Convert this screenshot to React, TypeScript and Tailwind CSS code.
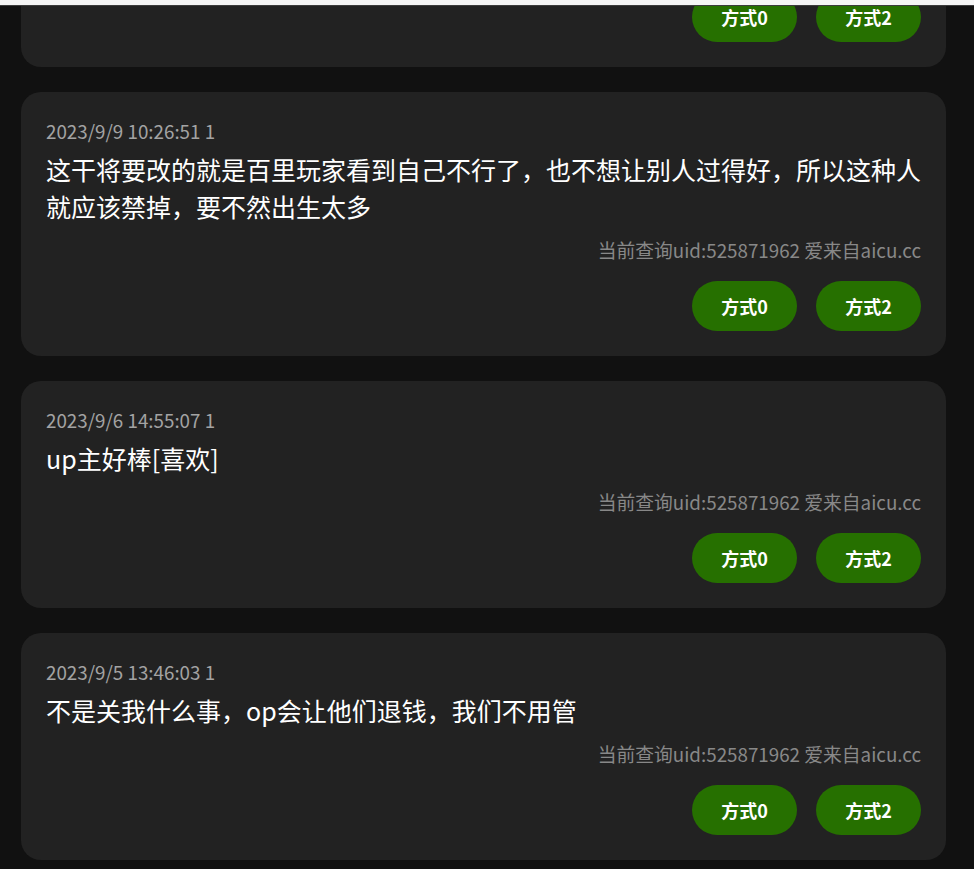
const comments = [
  {
    time: "2023/9/9 10:26:51 1",
    text: "这干将要改的就是百里玩家看到自己不行了，也不想让别人过得好，所以这种人就应该禁掉，要不然出生太多",
  },
  { time: "2023/9/6 14:55:07 1", text: "up主好棒[喜欢]" },
  { time: "2023/9/5 13:46:03 1", text: "不是关我什么事，op会让他们退钱，我们不用管" },
];

function Buttons() {
  return (
    <div className="flex justify-end gap-[19px]">
      <button className="h-[50px] w-[105px] rounded-full bg-[#267000] text-[18px] font-bold text-white">
        方式0
      </button>
      <button className="h-[50px] w-[105px] rounded-full bg-[#267000] text-[18px] font-bold text-white">
        方式2
      </button>
    </div>
  );
}

function CommentCard({ time, text }: { time: string; text: string }) {
  return (
    <div className="rounded-[20px] bg-[#222222] px-[25px] py-[25px]">
      <div className="text-[18.8px] leading-[27px] text-[#a3a3a3]">{time}</div>
      <div className="mt-[7px] text-[25px] leading-[37px] text-white">{text}</div>
      <div className="mt-[11px] text-right text-[18.8px] leading-[27px] text-[#888888]">
        当前查询uid:525871962 爱来自aicu.cc
      </div>
      <div className="mt-[18px]">
        <Buttons />
      </div>
    </div>
  );
}

export default function App() {
  return (
    <div
      className="h-[869px] w-full overflow-hidden bg-[#111111]"
      style={{ fontFamily: '"Noto Sans CJK SC", "Noto Sans", sans-serif' }}
    >
      {/* top of the page, mostly scrolled away */}
      <div className="h-[6px] border-b border-[#3c3c3c] bg-[#f5f5f5]" />

      <div className="flex flex-col gap-[25px] pl-[21px] pr-[28px]">
        {/* previous card, cut off */}
        <div className="rounded-b-[20px] bg-[#222222] px-[25px] pb-[25px]">
          <div className="flex h-[36px] flex-col justify-end overflow-hidden">
            <Buttons />
          </div>
        </div>

        {comments.map((c) => (
          <CommentCard key={c.time} time={c.time} text={c.text} />
        ))}
      </div>
    </div>
  );
}
